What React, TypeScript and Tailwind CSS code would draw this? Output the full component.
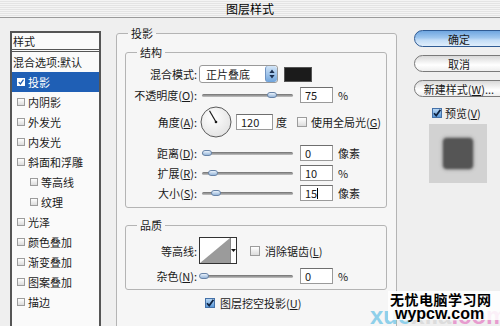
import type { ReactNode } from 'react';

const styles = [
  { name: '内阴影' },
  { name: '外发光' },
  { name: '内发光' },
  { name: '斜面和浮雕' },
  { name: '等高线', indent: true },
  { name: '纹理', indent: true },
  { name: '光泽' },
  { name: '颜色叠加' },
  { name: '渐变叠加' },
  { name: '图案叠加' },
  { name: '描边' },
];

function CheckBox({ checked = false, onBlue = false, small = false }: { checked?: boolean; onBlue?: boolean; small?: boolean }) {
  const size = small ? 'w-[8px] h-[8px]' : 'w-[10px] h-[10px]';
  if (!checked) {
    return <span className={`${size} shrink-0 border border-[#9c9c9c] bg-[linear-gradient(to_bottom,#ffffff,#dcdcdc)]`} />;
  }
  return (
    <span
      className={`${size} shrink-0 flex items-center justify-center border ${
        onBlue ? 'border-white bg-white' : 'border-[#4571a8] bg-[linear-gradient(to_bottom,#b7d6f4,#5b98d8)]'
      }`}
    >
      <svg width="8" height="8" viewBox="0 0 8 8">
        <path d="M1 4.2 L3.2 6.6 L7.4 0.8" fill="none" stroke={onBlue ? '#1d5db0' : '#0e2240'} strokeWidth="1.7" />
      </svg>
    </span>
  );
}

function Key({ text, k, tail = '' }: { text: string; k: string; tail?: string }) {
  return (
    <span>
      {text}(<u>{k}</u>){tail}
    </span>
  );
}

function Slider({ at }: { at: number }) {
  return (
    <div className="relative w-[91px] h-[8px] shrink-0 flex items-center">
      <div className="w-full h-[3px] rounded-full bg-[linear-gradient(to_bottom,#6f6f6f,#c4c4c4)]" />
      <div
        className="absolute top-[1px] w-[10px] h-[6px] rounded-full border border-[#6884a8] bg-[linear-gradient(to_bottom,#e8f1fb,#98b7da)]"
        style={{ left: at }}
      />
    </div>
  );
}

function Field({ value, wide = false, caret = false }: { value: string; wide?: boolean; caret?: boolean }) {
  return (
    <div
      className={`${wide ? 'w-[37px]' : 'w-[33px]'} h-[16px] shrink-0 flex items-center border border-[#9a9a9a] border-t-[#6e6e6e] bg-white pl-[4px] text-[11px]`}
    >
      {value}
      {caret && <span className="w-px h-[11px] bg-black" />}
    </div>
  );
}

function Label({ children }: { children: ReactNode }) {
  return <div className="w-[71px] shrink-0 text-right whitespace-nowrap">{children}</div>;
}

function SliderRow({ label, at, value, unit, caret = false, first = false }: { label: ReactNode; at: number; value: string; unit: string; caret?: boolean; first?: boolean }) {
  return (
    <div className={`flex items-center h-[16px] ${first ? 'mt-[8px]' : 'mt-[4px]'}`}>
      <Label>{label}</Label>
      <div className="ml-[5px]">
        <Slider at={at} />
      </div>
      <div className="ml-[7px]">
        <Field value={value} caret={caret} />
      </div>
      <span className="ml-[5px]">{unit}</span>
    </div>
  );
}

function Dial() {
  return (
    <svg width="32" height="32" viewBox="0 0 32 32" className="shrink-0">
      <defs>
        <radialGradient id="dialFill" cx="40%" cy="35%" r="70%">
          <stop offset="0%" stopColor="#ffffff" />
          <stop offset="100%" stopColor="#e2e2e2" />
        </radialGradient>
      </defs>
      <circle cx="16" cy="16" r="15" fill="url(#dialFill)" stroke="#5a5a5a" strokeWidth="1" />
      <line x1="16" y1="16" x2="9.5" y2="4.8" stroke="#1a1a1a" strokeWidth="1.2" />
      <circle cx="16" cy="16" r="1.3" fill="#1a1a1a" />
    </svg>
  );
}

function AquaButton({ children, primary = false }: { children: ReactNode; primary?: boolean }) {
  return (
    <div
      className={`h-[17px] w-[92px] shrink-0 flex items-center justify-center rounded-l-full border text-[11px] ${
        primary
          ? 'border-[#2f5b94] bg-[linear-gradient(to_bottom,#6fa6e0_0%,#9fc7ef_45%,#c2dcf6_60%,#e0eefb_100%)]'
          : 'border-[#7a7a7a] bg-[linear-gradient(to_bottom,#d9d9d9_0%,#f6f6f6_45%,#ffffff_60%,#eeeeee_100%)]'
      }`}
    >
      <span className="pr-[2px]">{children}</span>
    </div>
  );
}

export default function App() {
  return (
    <div className="relative w-[500px] h-[326px] overflow-hidden bg-[#efefef] text-[11px] leading-[14px] text-[#1a1a1a] font-['Noto_Sans_CJK_SC',sans-serif]">
      <div className="h-[18px] flex items-center justify-center border-b border-[#9a9a9a] bg-[repeating-linear-gradient(to_bottom,#f4f4f4_0px,#f4f4f4_1px,#e4e4e4_1px,#e4e4e4_2px)] text-[12px] text-black">
        图层样式
      </div>

      <div className="flex items-start">
        {/* style list */}
        <div className="ml-[10px] mt-[13px] w-[91px] h-[320px] shrink-0 border-2 border-[#555555] bg-[#fafafa]">
          <div className="h-[19px] flex items-center pl-[1px] border-b-[3px] border-double border-[#555555]">样式</div>
          <div className="h-[20px] flex items-center pl-[1px] whitespace-nowrap">混合选项:默认</div>
          <div className="h-[20px] flex items-center gap-[3px] pl-[5px] bg-[#1f5fb5] text-white">
            <CheckBox checked onBlue small />
            投影
          </div>
          {styles.map((s) => (
            <div key={s.name} className={`h-[20px] flex items-center gap-[3px] ${s.indent ? 'pl-[18px]' : 'pl-[5px]'}`}>
              <CheckBox small />
              {s.name}
            </div>
          ))}
        </div>

        {/* settings */}
        <fieldset className="ml-[15px] mt-[8px] w-[281px] h-[330px] shrink-0 border border-[#b4b4b4] rounded-[3px] bg-[#f6f6f6] pl-[8px] pr-[9px]">
          <legend className="ml-[3px] px-[3px] leading-[14px]">投影</legend>

          <fieldset className="mt-[5px] border border-[#b4b4b4] rounded-[3px] pb-[6px]">
            <legend className="ml-[11px] px-[3px] leading-[14px]">结构</legend>
            <div className="flex items-center h-[18px] mt-[6px]">
              <Label>混合模式:</Label>
              <div className="ml-[2px] w-[79px] h-[18px] shrink-0 flex rounded-[3px] border border-[#9a9a9a] bg-white overflow-hidden">
                <span className="flex-1 flex items-center pl-[6px]">正片叠底</span>
                <span className="w-[12px] flex items-center justify-center rounded-[3px] border-l border-[#6f93c2] bg-[linear-gradient(to_bottom,#d2e5f8,#6fa4dc)]">
                  <svg width="6" height="10" viewBox="0 0 6 10">
                    <path d="M3 0.5 L5.6 4 L0.4 4 Z M3 9.5 L5.6 6 L0.4 6 Z" fill="#1a2f4f" />
                  </svg>
                </span>
              </div>
              <div className="ml-[6px] w-[28px] h-[15px] shrink-0 bg-[#1b1b1b] border border-[#555555]" />
            </div>

            <div className="flex items-center h-[16px] mt-[4px]">
              <Label>
                <Key text="不透明度" k="O" tail=":" />
              </Label>
              <div className="ml-[5px]">
                <Slider at={65} />
              </div>
              <div className="ml-[7px]">
                <Field value="75" />
              </div>
              <span className="ml-[5px]">%</span>
            </div>

            <div className="flex items-center h-[30px] mt-[4px]">
              <Label>
                <Key text="角度" k="A" tail=":" />
              </Label>
              <div className="ml-[3px]">
                <Dial />
              </div>
              <div className="ml-[4px]">
                <Field value="120" wide />
              </div>
              <span className="ml-[3px]">度</span>
              <div className="ml-[10px] flex items-center gap-[4px] whitespace-nowrap">
                <CheckBox />
                <Key text="使用全局光" k="G" />
              </div>
            </div>

            <SliderRow first label={<Key text="距离" k="D" tail=":" />} at={0} value="0" unit="像素" />
            <SliderRow label={<Key text="扩展" k="R" tail=":" />} at={6} value="10" unit="%" />
            <SliderRow label={<Key text="大小" k="S" tail=":" />} at={9} value="15" unit="像素" caret />
          </fieldset>

          <fieldset className="mt-[10px] border border-[#b4b4b4] rounded-[3px] pb-[5px]">
            <legend className="ml-[11px] px-[3px] leading-[14px]">品质</legend>
            <div className="flex items-center h-[27px] mt-[5px]">
              <Label>等高线:</Label>
              <div className="ml-[2px] w-[38px] h-[27px] shrink-0 flex border border-[#333333] bg-white">
                <svg width="30" height="25" viewBox="0 0 30 25" className="shrink-0">
                  <polygon points="0,25 30,0 30,25" fill="#9b9b9b" />
                </svg>
                <span className="flex-1 flex items-center justify-center border-l border-[#888888]">
                  <svg width="5" height="3" viewBox="0 0 5 3">
                    <path d="M0 0 L5 0 L2.5 3 Z" fill="#111111" />
                  </svg>
                </span>
              </div>
              <div className="ml-[13px] flex items-center gap-[5px] whitespace-nowrap">
                <CheckBox />
                <Key text="消除锯齿" k="L" />
              </div>
            </div>
            <SliderRow label={<Key text="杂色" k="N" tail=":" />} at={-3} value="0" unit="%" />
          </fieldset>

          <div className="mt-[6px] ml-[80px] h-[14px] flex items-center gap-[5px] whitespace-nowrap">
            <CheckBox checked />
            <Key text="图层挖空投影" k="U" />
          </div>
        </fieldset>

        {/* actions */}
        <div className="ml-[17px] mt-[12px] w-[92px] shrink-0 flex flex-col">
          <AquaButton primary>确定</AquaButton>
          <div className="mt-[8px]">
            <AquaButton>取消</AquaButton>
          </div>
          <div className="mt-[8px]">
            <AquaButton>
              新建样式(<u>W</u>)...
            </AquaButton>
          </div>
          <div className="mt-[10px] ml-[18px] h-[12px] flex items-center gap-[3px]">
            <CheckBox checked />
            <Key text="预览" k="V" />
          </div>
          <div className="mt-[5px] ml-[15px] w-[58px] h-[59px] flex items-center justify-center bg-[#d2d2d2]">
            <div className="w-[30px] h-[31px] rounded-[4px] bg-[#555555] blur-[1px] shadow-[0_0_3px_1px_rgba(70,70,70,0.4)]" />
          </div>
        </div>
      </div>

      {/* watermark */}
      <div className="absolute right-0 bottom-0 w-[130px] h-[38px] overflow-hidden">
        <div className="absolute left-0 top-[14px] text-[24px] leading-[28px] font-bold font-['Liberation_Sans',sans-serif] whitespace-nowrap">
          <span className="text-[#8fd0ea]">xue</span>
          <span className="text-[#dcdcdc]">xila</span>
          <span className="text-[#e79ccf]">.com</span>
        </div>
        <div className="absolute left-[18px] top-[3px] w-[112px] h-[29px] bg-white/85" />
        <div className="absolute left-[20px] top-[3px] text-[14px] leading-[16px] font-bold text-black tracking-[0.5px] whitespace-nowrap">无忧电脑学习网</div>
        <div className="absolute left-[25px] top-[18px] text-[16px] leading-[16px] font-bold text-black font-['Liberation_Sans',sans-serif] whitespace-nowrap">wypcw.com</div>
      </div>
    </div>
  );
}
